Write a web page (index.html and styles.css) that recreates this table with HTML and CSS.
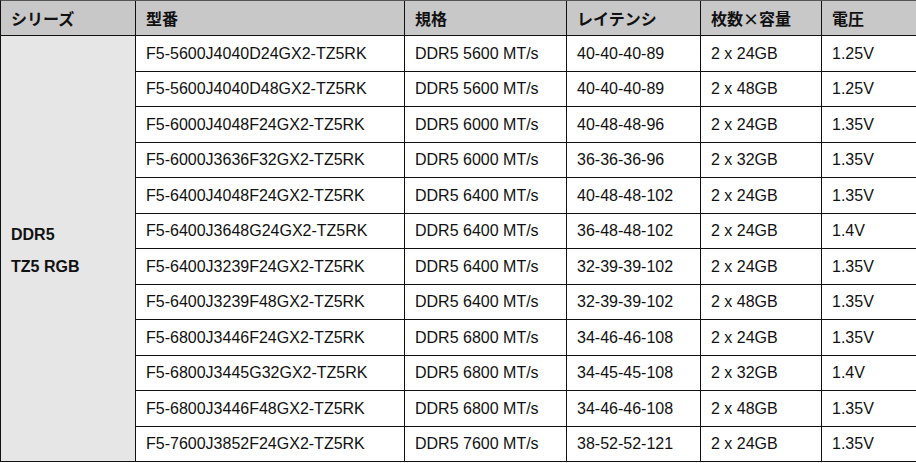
FILE: index.html
```html
<!DOCTYPE html>
<html lang="ja">
<head>
<meta charset="utf-8">
<title>DDR5 TZ5 RGB</title>
<link rel="stylesheet" href="styles.css">
</head>
<body>
<div class="spec">
  <div class="cell head">シリーズ</div>
  <div class="cell head">型番</div>
  <div class="cell head">規格</div>
  <div class="cell head">レイテンシ</div>
  <div class="cell head">枚数×容量</div>
  <div class="cell head">電圧</div>

  <div class="cell series"><span>DDR5</span><span>TZ5 RGB</span></div>

  <div class="cell">F5-5600J4040D24GX2-TZ5RK</div><div class="cell">DDR5 5600 MT/s</div><div class="cell">40-40-40-89</div><div class="cell">2 x 24GB</div><div class="cell">1.25V</div>
  <div class="cell">F5-5600J4040D48GX2-TZ5RK</div><div class="cell">DDR5 5600 MT/s</div><div class="cell">40-40-40-89</div><div class="cell">2 x 48GB</div><div class="cell">1.25V</div>
  <div class="cell">F5-6000J4048F24GX2-TZ5RK</div><div class="cell">DDR5 6000 MT/s</div><div class="cell">40-48-48-96</div><div class="cell">2 x 24GB</div><div class="cell">1.35V</div>
  <div class="cell">F5-6000J3636F32GX2-TZ5RK</div><div class="cell">DDR5 6000 MT/s</div><div class="cell">36-36-36-96</div><div class="cell">2 x 32GB</div><div class="cell">1.35V</div>
  <div class="cell">F5-6400J4048F24GX2-TZ5RK</div><div class="cell">DDR5 6400 MT/s</div><div class="cell">40-48-48-102</div><div class="cell">2 x 24GB</div><div class="cell">1.35V</div>
  <div class="cell">F5-6400J3648G24GX2-TZ5RK</div><div class="cell">DDR5 6400 MT/s</div><div class="cell">36-48-48-102</div><div class="cell">2 x 24GB</div><div class="cell">1.4V</div>
  <div class="cell">F5-6400J3239F24GX2-TZ5RK</div><div class="cell">DDR5 6400 MT/s</div><div class="cell">32-39-39-102</div><div class="cell">2 x 24GB</div><div class="cell">1.35V</div>
  <div class="cell">F5-6400J3239F48GX2-TZ5RK</div><div class="cell">DDR5 6400 MT/s</div><div class="cell">32-39-39-102</div><div class="cell">2 x 48GB</div><div class="cell">1.35V</div>
  <div class="cell">F5-6800J3446F24GX2-TZ5RK</div><div class="cell">DDR5 6800 MT/s</div><div class="cell">34-46-46-108</div><div class="cell">2 x 24GB</div><div class="cell">1.35V</div>
  <div class="cell">F5-6800J3445G32GX2-TZ5RK</div><div class="cell">DDR5 6800 MT/s</div><div class="cell">34-45-45-108</div><div class="cell">2 x 32GB</div><div class="cell">1.4V</div>
  <div class="cell">F5-6800J3446F48GX2-TZ5RK</div><div class="cell">DDR5 6800 MT/s</div><div class="cell">34-46-46-108</div><div class="cell">2 x 48GB</div><div class="cell">1.35V</div>
  <div class="cell">F5-7600J3852F24GX2-TZ5RK</div><div class="cell">DDR5 7600 MT/s</div><div class="cell">38-52-52-121</div><div class="cell">2 x 24GB</div><div class="cell">1.35V</div>
</div>
</body>
</html>
```
FILE: styles.css
```css
html, body {
  margin: 0;
  padding: 0;
  background: #fff;
  overflow: hidden;
}

.spec {
  display: grid;
  grid-template-columns: 134px 268px 161px 133px 120px 100px;
  grid-template-rows: 34px 35px 34px 35px 34px 35px 34px 35px 34px 35px 34px 35px 34px;
  gap: 1px;
  width: max-content;
  background: #111;
  border: 1px solid #111;
  border-top-color: #555;
  font-family: "Liberation Sans", "Noto Sans CJK JP", sans-serif;
  font-size: 16px;
  color: #111;
}

.cell {
  background: #fff;
  display: flex;
  align-items: center;
  padding-left: 10px;
  white-space: nowrap;
}

.head {
  background: #c8c8c8;
  font-family: "Noto Sans CJK JP", sans-serif;
  font-weight: 700;
  padding-left: 10px;
}

.series {
  grid-row: 2 / span 12;
  background: #e6e6e6;
  flex-direction: column;
  align-items: flex-start;
  justify-content: center;
  padding-top: 5px;
  font-weight: 700;
  line-height: 32px;
}
```
